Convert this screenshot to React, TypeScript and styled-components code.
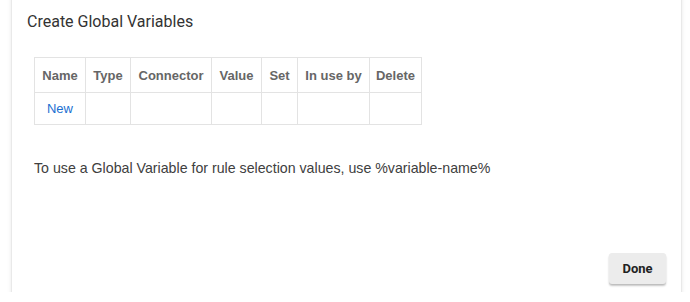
import styled, { createGlobalStyle } from 'styled-components'

const GlobalStyle = createGlobalStyle`
    html, body {
        margin: 0;
        padding: 0;
        background: #ffffff;
        overflow: hidden;
    }
`

const Page = styled.div`
    width: 690px;
    height: 302px;
    padding: 0 9px 0 12px;
    box-sizing: border-box;
`

const Card = styled.div`
    display: flex;
    flex-direction: column;
    margin-top: -10px;
    height: 307px;
    box-sizing: border-box;
    padding: 22px 15px 13px 15px;
    background: #fff;
    border-radius: 2px;
    box-shadow: 0 2px 2px rgba(0, 0, 0, 0.14), 0 3px 1px -2px rgba(0, 0, 0, 0.2), 0 1px 5px rgba(0, 0, 0, 0.12);
`

const Title = styled.h2`
    margin: 0;
    font-family: Roboto, "Liberation Sans", sans-serif;
    font-size: 16px;
    font-weight: 400;
    line-height: 19px;
    color: #333;
`

const Content = styled.div`
    padding-left: 7px;
`

const Table = styled.table`
    margin-top: 26px;
    border-collapse: collapse;
    table-layout: fixed;
    font-family: "Liberation Sans", Arial, sans-serif;
    font-size: 13px;
`

const Th = styled.th<{ $w: number }>`
    width: ${(p) => p.$w}px;
    height: 34px;
    padding: 0;
    border: 1px solid #e3e3e3;
    font-weight: 700;
    color: #666;
    text-align: center;
    white-space: nowrap;
`

const Td = styled.td`
    height: 31px;
    padding: 0;
    border: 1px solid #e3e3e3;
    text-align: center;
`

const NewLink = styled.a`
    color: #1a6fd1;
    text-decoration: none;
    cursor: pointer;
`

const Hint = styled.p`
    margin: 35px 0 0 0;
    font-family: "Liberation Sans", Arial, sans-serif;
    font-size: 14.2px;
    color: #404040;
`

const Footer = styled.div`
    margin-top: auto;
    display: flex;
    justify-content: flex-end;
`

const Button = styled.button`
    width: 57px;
    height: 31px;
    border: none;
    border-radius: 3px;
    background: #ececec;
    box-shadow: 0 2px 2px rgba(0, 0, 0, 0.22), 0 1px 1px rgba(0, 0, 0, 0.06);
    font-family: Roboto, "Liberation Sans", sans-serif;
    font-size: 13px;
    font-weight: 700;
    color: #222;
    cursor: pointer;
`

const columns = [
    { name: 'Name', w: 50 },
    { name: 'Type', w: 44 },
    { name: 'Connector', w: 80 },
    { name: 'Value', w: 49 },
    { name: 'Set', w: 35 },
    { name: 'In use by', w: 71 },
    { name: 'Delete', w: 51 },
]

const App = () => {
    return (
        <Page>
            <GlobalStyle />
            <Card>
                <Title>Create Global Variables</Title>
                <Content>
                    <Table>
                        <thead>
                            <tr>
                                {columns.map((c) => <Th key={c.name} $w={c.w}>{c.name}</Th>)}
                            </tr>
                        </thead>
                        <tbody>
                            <tr>
                                <Td><NewLink>New</NewLink></Td>
                                {columns.slice(1).map((c) => <Td key={'cell' + c.name} />)}
                            </tr>
                        </tbody>
                    </Table>
                    <Hint>To use a Global Variable for rule selection values, use %variable-name%</Hint>
                </Content>
                <Footer>
                    <Button>Done</Button>
                </Footer>
            </Card>
        </Page>
    )
}

export default App
